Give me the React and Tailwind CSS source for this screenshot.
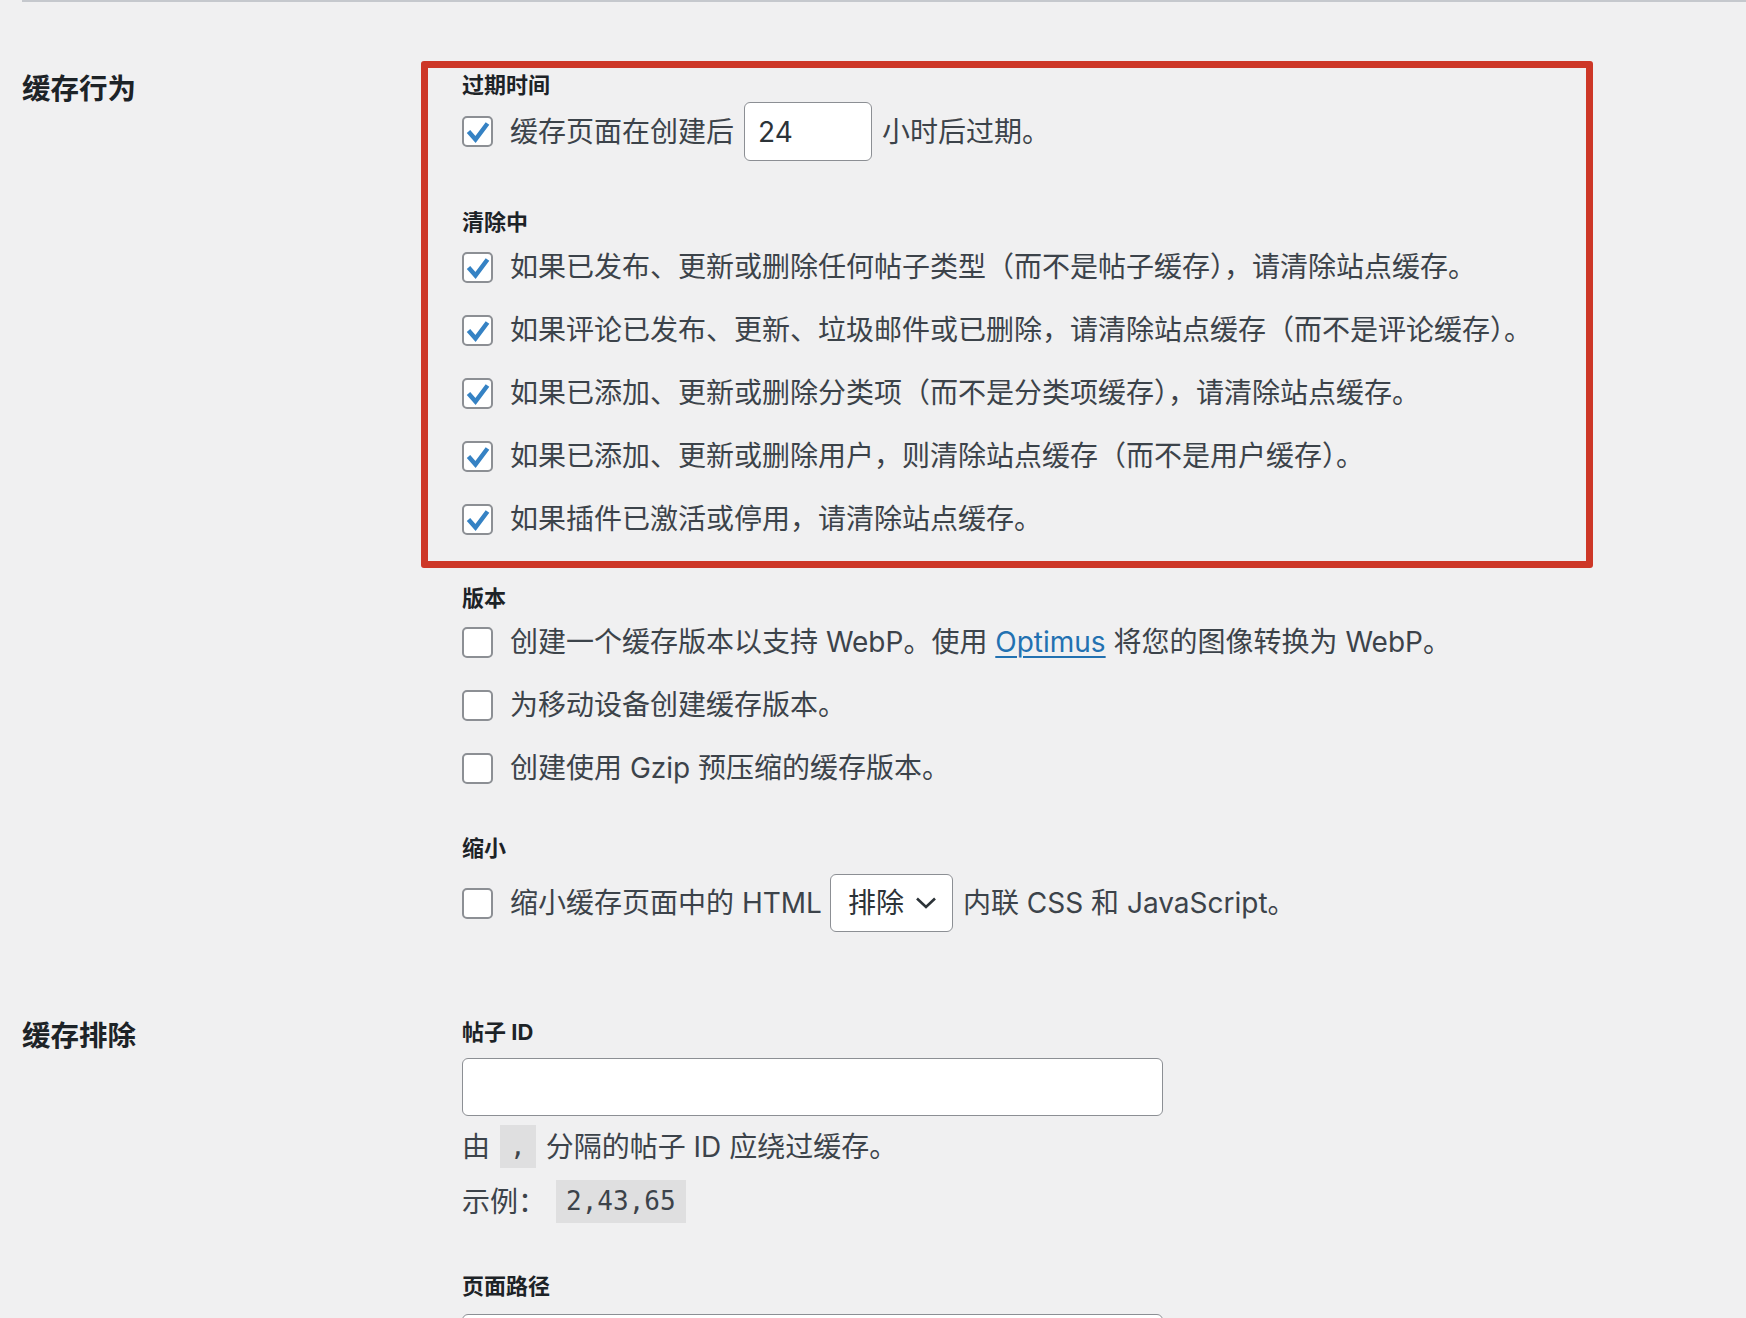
import React from "react";

const SANS = "font-['Inter','Noto_Sans_CJK_SC',sans-serif]";
const MONO = "font-['DejaVu_Sans_Mono','Liberation_Mono',monospace]";

function Checkbox({ checked }) {
  return (
    <span
      role="checkbox"
      aria-checked={checked ? "true" : "false"}
      className="flex h-[31px] w-[31px] shrink-0 items-center justify-center rounded-[5px] border-2 border-[#8c8f94] bg-white"
    >
      {checked && (
        <svg width="27" height="27" viewBox="0 0 27 27" className="block">
          <polyline
            points="4.5,13.5 11.5,21.5 23.5,5.5"
            fill="none"
            stroke="#3582c4"
            strokeWidth="4.5"
            strokeLinejoin="miter"
          />
        </svg>
      )}
    </span>
  );
}

function CheckRow({ checked, children }) {
  return (
    <div className="flex h-[40px] items-center">
      <Checkbox checked={checked} />
      <span className="ml-[17px] whitespace-nowrap">{children}</span>
    </div>
  );
}

function Label({ children, className = "" }) {
  return (
    <div className={`h-[30px] text-[22px] font-bold leading-[30px] text-[#1d2327] ${className}`}>
      {children}
    </div>
  );
}

function Code({ children }) {
  return (
    <code className={`${MONO} flex h-[43px] items-center bg-[#dfdfe0] px-[10px] text-[26px] text-[#3c434a]`}>
      {children}
    </code>
  );
}

function CacheBehavior() {
  return (
    <div className="flex flex-col">
      {/* expiry + clearing options */}
      <div className="w-[1172px] rounded-[3px] border-[7px] border-[#cd3727] pb-[22px] pl-[34px] pt-[2px]">
        <Label>过期时间</Label>
        <div className="mt-[2px] flex h-[59px] items-center">
          <Checkbox checked />
          <span className="ml-[17px] whitespace-nowrap">缓存页面在创建后</span>
          <input
            type="text"
            readOnly
            defaultValue="24"
            className={`${SANS} ml-[10px] h-[59px] w-[128px] rounded-[6px] border-[1.5px] border-[#8c8f94] bg-white pl-[13px] text-[28px] text-[#2c3338] outline-none`}
          />
          <span className="ml-[10px] whitespace-nowrap">小时后过期。</span>
        </div>

        <Label className="mt-[46px]">清除中</Label>
        <div className="mt-[10px] flex flex-col gap-[23px]">
          <CheckRow checked>如果已发布、更新或删除任何帖子类型（而不是帖子缓存），请清除站点缓存。</CheckRow>
          <CheckRow checked>如果评论已发布、更新、垃圾邮件或已删除，请清除站点缓存（而不是评论缓存）。</CheckRow>
          <CheckRow checked>如果已添加、更新或删除分类项（而不是分类项缓存），请清除站点缓存。</CheckRow>
          <CheckRow checked>如果已添加、更新或删除用户，则清除站点缓存（而不是用户缓存）。</CheckRow>
          <CheckRow checked>如果插件已激活或停用，请清除站点缓存。</CheckRow>
        </div>
      </div>

      <div className="flex flex-col pl-[41px]">
        <Label className="mt-[15px]">版本</Label>
        <div className="mt-[9px] flex flex-col gap-[23px]">
          <CheckRow>
            创建一个缓存版本以支持 WebP。使用{" "}
            <a href="#" className="text-[#2271b1] underline decoration-[1.5px] underline-offset-[4px]">
              Optimus
            </a>{" "}
            将您的图像转换为 WebP。
          </CheckRow>
          <CheckRow>为移动设备创建缓存版本。</CheckRow>
          <CheckRow>创建使用 Gzip 预压缩的缓存版本。</CheckRow>
        </div>

        <Label className="mt-[45px]">缩小</Label>
        <div className="mt-[11px] flex h-[58px] items-center">
          <Checkbox />
          <span className="ml-[17px] whitespace-nowrap">缩小缓存页面中的 HTML</span>
          <div className="ml-[8px] flex h-[58px] w-[123px] items-center justify-between rounded-[6px] border-[1.5px] border-[#8c8f94] bg-white pl-[17px] pr-[15px] text-[#2c3338]">
            <span>排除</span>
            <svg width="22" height="14" viewBox="0 0 22 14" className="block">
              <polyline points="2,2.5 11,11 20,2.5" fill="none" stroke="#2c3338" strokeWidth="2.6" />
            </svg>
          </div>
          <span className="ml-[10px] whitespace-nowrap">内联 CSS 和 JavaScript。</span>
        </div>
      </div>
    </div>
  );
}

function CacheExclusions() {
  return (
    <div className="flex flex-col pl-[41px]">
      <Label>帖子 ID</Label>
      <input
        type="text"
        readOnly
        className="mt-[11px] h-[58px] w-[701px] rounded-[6px] border-[1.5px] border-[#8c8f94] bg-white outline-none"
      />
      <div className="mt-[9px] flex h-[43px] items-center whitespace-nowrap">
        <span>由</span>
        <span className="ml-[10px]">
          <Code>,</Code>
        </span>
        <span className="ml-[10px]">分隔的帖子 ID 应绕过缓存。</span>
      </div>
      <div className="mt-[12px] flex h-[43px] items-center whitespace-nowrap">
        <span>示例：</span>
        <span className="ml-[10px]">
          <Code>2,43,65</Code>
        </span>
      </div>

      <Label className="mt-[48px]">页面路径</Label>
      <input
        type="text"
        readOnly
        className="mt-[13px] h-[58px] w-[701px] rounded-[6px] border-[1.5px] border-[#8c8f94] bg-white outline-none"
      />
    </div>
  );
}

export default function App() {
  return (
    <div className={`${SANS} min-h-[1318px] overflow-hidden bg-[#f0f0f1] text-[28px] text-[#3c434a]`}>
      <div className="ml-[22px] h-[2px] bg-[#c5c8cd]" />
      <div className="mt-[59px] flex flex-col pl-[22px]">
        <div className="flex">
          <div className="w-[399px] shrink-0 pt-[13px]">
            <h2 className="text-[28.5px] font-bold leading-[30px] text-[#1d2327]">缓存行为</h2>
          </div>
          <CacheBehavior />
        </div>

        <div className="mt-[85px] flex">
          <div className="w-[399px] shrink-0 pt-[4px]">
            <h2 className="text-[28.5px] font-bold leading-[30px] text-[#1d2327]">缓存排除</h2>
          </div>
          <CacheExclusions />
        </div>
      </div>
    </div>
  );
}
